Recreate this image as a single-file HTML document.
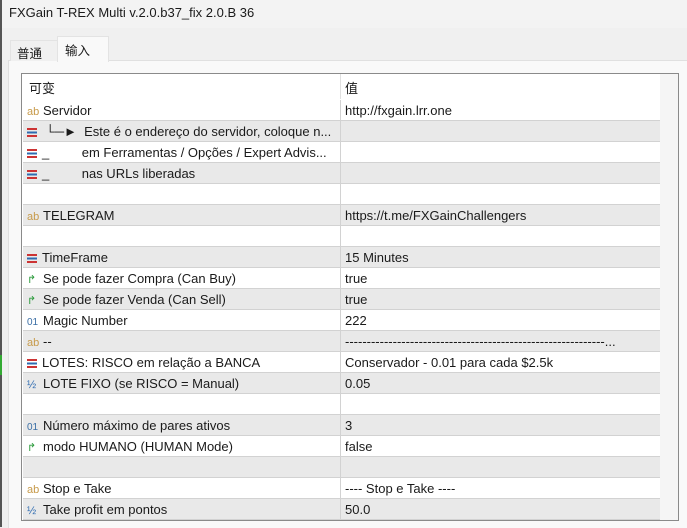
<!DOCTYPE html><html><head><style>
body{margin:0;width:687px;height:527px;background:#f0f0f0;font-family:"Liberation Sans","Noto Sans CJK SC",sans-serif;font-size:13px;color:#1a1a1a;position:relative;overflow:hidden}
.title{position:absolute;left:0;top:0;width:687px;height:28px;background:#f3f3f3;}
.title span{position:absolute;left:9px;top:5px;font-size:13px}
.edge{position:absolute;left:0;top:0;width:2px;height:527px;background:#555}
.tab{position:absolute;font-size:12.5px}
.panel{position:absolute;left:8px;top:60px;width:679px;height:467px;background:#f9f9f9;border-top:1px solid #e0e0e0;border-left:1px solid #e0e0e0}
.box{position:absolute;left:21px;top:73px;width:656px;height:446px;background:#fff;border:1px solid #8a8a8a;overflow:hidden}
.row{position:absolute;left:1px;width:637px;height:20px;border-bottom:1px solid #d2d2d2}
.row.g{background:#e9e9e9}
.c1{position:absolute;left:4px;top:3px;white-space:nowrap}
.c2{position:absolute;left:322px;top:3px;white-space:nowrap}
.div{position:absolute;left:318px;top:0;width:1px;height:446px;background:#d2d2d2}
.ic{display:inline-block;width:16px;font-size:11px}
.ab{color:#c79a4a}.o1{color:#3a6ea5;font-size:10px}.h{color:#2e6bb0}.ar{color:#2a9a3a}
.lst{display:inline-block;width:11px;height:9px;margin-right:5px;vertical-align:middle;background:linear-gradient(#c33 0 2px,transparent 2px 3.5px,#2e6bb0 3.5px 5.5px,transparent 5.5px 7px,#c33 7px 9px);width:10px}
.sb{position:absolute;left:638px;top:0;width:18px;height:446px;background:#f5f5f5}
.th{position:absolute;left:646px;top:19px;width:3px;height:50px;background:#888;border-radius:2px}
</style></head><body>
<div class="title"><span>FXGain T-REX Multi v.2.0.b37_fix 2.0.B 36</span></div>
<div class="edge"></div>
<div style="position:absolute;left:0;top:355px;width:2px;height:20px;background:#3a3"></div>
<div class="panel"></div>
<div class="tab" style="left:10px;top:40px;width:46px;height:20px;background:#f0f0f0;border:1px solid #e3e3e3;border-bottom:none"><span style="position:absolute;left:6px;top:2px">普通</span></div>
<div class="tab" style="left:57px;top:36px;width:50px;height:25px;background:#f9f9f9;border:1px solid #e3e3e3;border-bottom:none"><span style="position:absolute;left:7px;top:3px">输入</span></div>
<div class="box">
<div class="row" style="top:0;height:25px;border:none"><span class="c1" style="top:4px;left:6px">可变</span><span class="c2" style="top:4px">值</span></div>
<div class="row" style="top:26px"><span class="c1"><span class="ic ab">ab</span>Servidor</span><span class="c2">http://fxgain.lrr.one</span></div>
<div class="row g" style="top:47px"><span class="c1"><span class="lst"></span>&nbsp;└─► &nbsp;Este é o endereço do servidor, coloque n...</span></div>
<div class="row" style="top:68px"><span class="c1"><span class="lst"></span>_ &nbsp; &nbsp; &nbsp; &nbsp; em Ferramentas / Opções / Expert Advis...</span></div>
<div class="row g" style="top:89px"><span class="c1"><span class="lst"></span>_ &nbsp; &nbsp; &nbsp; &nbsp; nas URLs liberadas</span></div>
<div class="row" style="top:110px"></div>
<div class="row g" style="top:131px"><span class="c1"><span class="ic ab">ab</span>TELEGRAM</span><span class="c2">https://t.me/FXGainChallengers</span></div>
<div class="row" style="top:152px"></div>
<div class="row g" style="top:173px"><span class="c1"><span class="lst"></span>TimeFrame</span><span class="c2">15 Minutes</span></div>
<div class="row" style="top:194px"><span class="c1"><span class="ic ar">↱</span>Se pode fazer Compra (Can Buy)</span><span class="c2">true</span></div>
<div class="row g" style="top:215px"><span class="c1"><span class="ic ar">↱</span>Se pode fazer Venda (Can Sell)</span><span class="c2">true</span></div>
<div class="row" style="top:236px"><span class="c1"><span class="ic o1">01</span>Magic Number</span><span class="c2">222</span></div>
<div class="row g" style="top:257px"><span class="c1"><span class="ic ab">ab</span>--</span><span class="c2">------------------------------------------------------------...</span></div>
<div class="row" style="top:278px"><span class="c1"><span class="lst"></span>LOTES: RISCO em relação a BANCA</span><span class="c2">Conservador - 0.01 para cada $2.5k</span></div>
<div class="row g" style="top:299px"><span class="c1"><span class="ic h">½</span>LOTE FIXO (se RISCO = Manual)</span><span class="c2">0.05</span></div>
<div class="row" style="top:320px"></div>
<div class="row g" style="top:341px"><span class="c1"><span class="ic o1">01</span>Número máximo de pares ativos</span><span class="c2">3</span></div>
<div class="row" style="top:362px"><span class="c1"><span class="ic ar">↱</span>modo HUMANO (HUMAN Mode)</span><span class="c2">false</span></div>
<div class="row g" style="top:383px"></div>
<div class="row" style="top:404px"><span class="c1"><span class="ic ab">ab</span>Stop e Take</span><span class="c2">---- Stop e Take ----</span></div>
<div class="row g" style="top:425px"><span class="c1"><span class="ic h">½</span>Take profit em pontos</span><span class="c2">50.0</span></div>
<div class="div" style="top:0;height:25px;background:#e0e0e0"></div>
<div class="div" style="top:26px;height:420px"></div>
<div class="sb"><div class="th"></div></div>
</div>
</body></html>
